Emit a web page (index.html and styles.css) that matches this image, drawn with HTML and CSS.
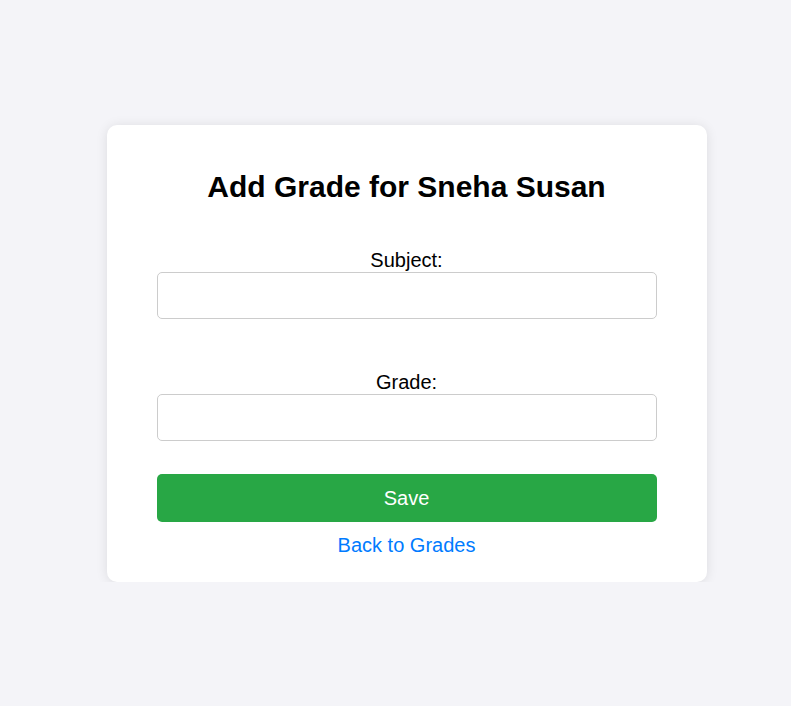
FILE: index.html
```html
<!DOCTYPE html>
<html>
<head>
<meta charset="utf-8">
<link rel="stylesheet" href="styles.css">
</head>
<body>
<div class="card">
  <h2 class="title">Add Grade for Sneha Susan</h2>
  <form class="form">
    <div class="group">
      <label class="label" for="subject">Subject:</label>
      <input class="input" id="subject" type="text">
    </div>
    <div class="group">
      <label class="label" for="grade">Grade:</label>
      <input class="input" id="grade" type="text">
    </div>
    <button class="btn" type="button">Save</button>
  </form>
  <a class="link" href="#">Back to Grades</a>
</div>
</body>
</html>
```
FILE: styles.css
```css
html, body { margin: 0; padding: 0; }
body {
  background: #f4f4f8;
  font-family: "Liberation Sans", Arial, sans-serif;
  font-size: 20px;
  color: #000;
  display: flex;
  justify-content: center;
  padding-top: 125px;
  padding-left: 22px;
}
.card {
  width: 600px;
  box-sizing: border-box;
  background: #fff;
  border-radius: 10px;
  box-shadow: 0 1px 12px rgba(0,0,0,0.1);
  padding: 25px 50px 25px;
  display: flex;
  flex-direction: column;
  align-items: center;
}
.title {
  font-size: 30px;
  font-weight: bold;
  margin: 20px 0 0;
  line-height: 34px;
  text-align: center;
}
.form {
  width: 500px;
  margin-top: 45px;
  display: flex;
  flex-direction: column;
}
.group {
  display: flex;
  flex-direction: column;
  margin-bottom: 52px;
}
.group + .group { margin-bottom: 33px; }
.label {
  text-align: center;
  line-height: 23px;
}
.input {
  height: 47px;
  box-sizing: border-box;
  border: 1px solid #ccc;
  border-radius: 5px;
  font-size: 20px;
  padding: 0 12px;
}
.btn {
  height: 48px;
  background: #28a745;
  color: #fff;
  border: none;
  border-radius: 5px;
  font-family: "Liberation Sans", Arial, sans-serif;
  font-size: 20px;
}
.link {
  margin-top: 12px;
  line-height: 23px;
  color: #007bff;
  text-decoration: none;
}
```
